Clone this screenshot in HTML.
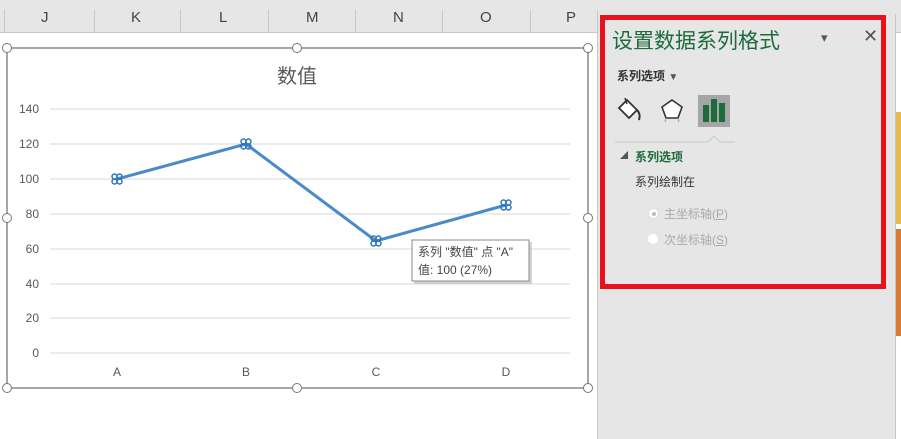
<!DOCTYPE html>
<html><head><meta charset="utf-8"><style>
body{margin:0;width:901px;height:439px;overflow:hidden;background:#fff;font-family:"Liberation Sans","Noto Sans CJK SC",sans-serif;position:relative}
.hdr{position:absolute;left:0;top:0;width:901px;height:32px;background:#e6e6e6;border-bottom:1px solid #c8c8c8}
.col{position:absolute;top:9px;font-size:15px;color:#444}
.sep{position:absolute;top:10px;height:22px;width:1px;background:#c8c8c8}
.panel{position:absolute;left:597px;top:14px;width:297px;height:425px;background:#e6e6e6;border-left:1px solid #c8c8c8;border-right:1px solid #c8c8c8}
.red{position:absolute;left:600px;top:15px;width:276px;height:264px;border:5px solid #e8121c}
.t{position:absolute;white-space:nowrap}
</style></head><body>
<div class="hdr"></div>
<div class="col" style="left:41px">J</div><div class="col" style="left:131px">K</div><div class="col" style="left:219px">L</div><div class="col" style="left:306px">M</div><div class="col" style="left:393px">N</div><div class="col" style="left:480px">O</div><div class="col" style="left:566px">P</div>
<div class="sep" style="left:4px"></div><div class="sep" style="left:94px"></div><div class="sep" style="left:180px"></div><div class="sep" style="left:268px"></div><div class="sep" style="left:355px"></div><div class="sep" style="left:442px"></div><div class="sep" style="left:530px"></div><div class="sep" style="left:597px"></div>
<svg style="position:absolute;left:0;top:0" width="600" height="439">
<rect x="7" y="48" width="581" height="340" fill="#fff" stroke="#888" stroke-width="1.5"/>
<g stroke="#d9d9d9" stroke-width="1">
<line x1="50" x2="570" y1="109" y2="109"/><line x1="50" x2="570" y1="144" y2="144"/><line x1="50" x2="570" y1="179" y2="179"/><line x1="50" x2="570" y1="214" y2="214"/><line x1="50" x2="570" y1="249" y2="249"/><line x1="50" x2="570" y1="284" y2="284"/><line x1="50" x2="570" y1="318" y2="318"/><line x1="50" x2="570" y1="353" y2="353"/>
</g>
<g font-size="12" fill="#595959" text-anchor="end" font-family="Liberation Sans">
<text x="39" y="113">140</text><text x="39" y="148">120</text><text x="39" y="183">100</text><text x="39" y="218">80</text><text x="39" y="253">60</text><text x="39" y="288">40</text><text x="39" y="322">20</text><text x="39" y="357">0</text>
</g>
<g font-size="12" fill="#595959" text-anchor="middle" font-family="Liberation Sans">
<text x="117" y="376">A</text><text x="246" y="376">B</text><text x="376" y="376">C</text><text x="506" y="376">D</text>
</g>
<text x="297" y="83" font-size="20" fill="#595959" text-anchor="middle" font-family="Noto Sans CJK SC">数值</text>
<polyline points="117,179 246,144 376,241 506,205" fill="none" stroke="#4a8ac9" stroke-width="3"/>
<g fill="none" stroke="#2e75c0" stroke-width="1.5">
<g transform="translate(117,179)"><circle cx="-2.5" cy="-2.5" r="2.5"/><circle cx="2.5" cy="-2.5" r="2.5"/><circle cx="-2.5" cy="2.5" r="2.5"/><circle cx="2.5" cy="2.5" r="2.5"/></g>
<g transform="translate(246,144)"><circle cx="-2.5" cy="-2.5" r="2.5"/><circle cx="2.5" cy="-2.5" r="2.5"/><circle cx="-2.5" cy="2.5" r="2.5"/><circle cx="2.5" cy="2.5" r="2.5"/></g>
<g transform="translate(376,241)"><circle cx="-2.5" cy="-2.5" r="2.5"/><circle cx="2.5" cy="-2.5" r="2.5"/><circle cx="-2.5" cy="2.5" r="2.5"/><circle cx="2.5" cy="2.5" r="2.5"/></g>
<g transform="translate(506,205)"><circle cx="-2.5" cy="-2.5" r="2.5"/><circle cx="2.5" cy="-2.5" r="2.5"/><circle cx="-2.5" cy="2.5" r="2.5"/><circle cx="2.5" cy="2.5" r="2.5"/></g>
</g>
<g fill="#fff" stroke="#777" stroke-width="1">
<circle cx="7" cy="48" r="4.5"/><circle cx="297" cy="48" r="4.5"/><circle cx="588" cy="48" r="4.5"/>
<circle cx="7" cy="218" r="4.5"/><circle cx="588" cy="218" r="4.5"/>
<circle cx="7" cy="388" r="4.5"/><circle cx="297" cy="388" r="4.5"/><circle cx="588" cy="388" r="4.5"/>
</g>
<rect x="414" y="242" width="118" height="42" fill="#aaa" opacity="0.5"/>
<rect x="412" y="240" width="117" height="41" fill="#fff" stroke="#888"/>
<text x="418" y="256" font-size="12" fill="#444" font-family="Liberation Sans,Noto Sans CJK SC">系列 "数值" 点 "A"</text>
<text x="418" y="274" font-size="12" fill="#444" font-family="Liberation Sans,Noto Sans CJK SC">值: 100 (27%)</text>
</svg>
<div style="position:absolute;left:896px;top:112px;width:5px;height:112px;background:#e8b84a"></div>
<div style="position:absolute;left:896px;top:229px;width:5px;height:107px;background:#d97a30"></div>
<div class="panel"></div>
<div class="red"></div>
<div class="t" style="left:612px;top:25px;font-size:21px;color:#1d6b3a">设置数据系列格式</div>
<div class="t" style="left:821px;top:30px;font-size:13px;color:#555">▾</div>
<div class="t" style="left:863px;top:26px;font-size:18px;color:#555">✕</div>
<div class="t" style="left:617px;top:67px;font-size:12px;font-weight:bold;color:#333">系列选项 <span style="font-size:10px;color:#555">▼</span></div>
<svg style="position:absolute;left:615px;top:94px" width="120" height="50">
<path d="M4 14 L12 6 L22 16 L14 24 Z" fill="#fff" stroke="#333" stroke-width="1.8"/><path d="M10 4 L12 10" stroke="#333" stroke-width="1.5"/><path d="M22 16 Q26 20 24 26" stroke="#333" stroke-width="2" fill="none"/>
<path d="M57 6 L67 13 L63 24 L51 24 L47 13 Z" fill="#fff" stroke="#333" stroke-width="1.6"/><path d="M51 24 L50 28 M63 24 L64 28" stroke="#999"/>
<rect x="83" y="1" width="32" height="32" fill="#a6a6a6"/>
<rect x="88" y="11" width="6" height="17" fill="#1d6b3a"/><rect x="96" y="5" width="6" height="23" fill="#1d6b3a"/><rect x="104" y="9" width="6" height="19" fill="#1d6b3a"/>
<path d="M0 48 L93 48 L99 42 L105 48 L280 48" fill="none" stroke="#c8c8c8"/>
</svg>
<div class="t" style="left:620px;top:150px;font-size:8px;color:#555">◢</div>
<div class="t" style="left:635px;top:148px;font-size:12px;font-weight:bold;color:#1d6b3a">系列选项</div>
<div class="t" style="left:635px;top:173px;font-size:12px;color:#333">系列绘制在</div>
<div style="position:absolute;left:648px;top:208px;width:9px;height:9px;border-radius:50%;background:#fff;border:1px solid #e0e0e0"><div style="margin:2.5px;width:4px;height:4px;border-radius:50%;background:#bbb"></div></div>
<div class="t" style="left:664px;top:205px;font-size:12px;color:#aaa">主坐标轴(<u>P</u>)</div>
<div style="position:absolute;left:648px;top:234px;width:10px;height:10px;border-radius:50%;background:#fff"></div>
<div class="t" style="left:664px;top:231px;font-size:12px;color:#aaa">次坐标轴(<u>S</u>)</div>
</body></html>
